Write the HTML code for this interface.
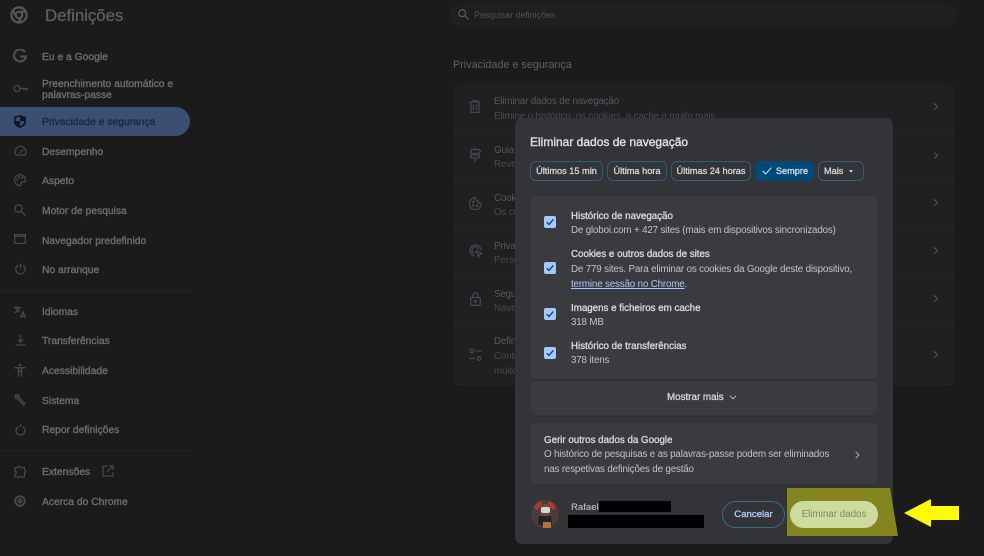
<!DOCTYPE html>
<html lang="pt"><head><meta charset="utf-8"><title>Definições</title>
<style>
*{box-sizing:border-box}
html,body{margin:0;padding:0}
body{width:984px;height:556px;overflow:hidden;background:#1b1b1b;font-family:"Liberation Sans",sans-serif;position:relative;filter:blur(.25px)}
.a{position:absolute;white-space:nowrap}
.n{position:absolute;left:42px;margin-top:1px;font-size:10.3px;line-height:11px;color:#696b6e;-webkit-text-stroke:.4px #696b6e;white-space:nowrap}
svg.i{position:absolute;fill:none;stroke:#45474a;stroke-width:1.3}
.sep{position:absolute;left:0;width:192px;height:1px;background:#232425}
.rowline{position:absolute;left:453px;width:502px;height:1px;background:#27282a}
.rt{position:absolute;left:494px;margin-top:2px;font-size:9.8px;letter-spacing:-.15px;color:#55575a;white-space:nowrap}
.rs{position:absolute;left:494px;margin-top:2px;font-size:9.8px;letter-spacing:-.15px;color:#47494c;white-space:nowrap}
.ch{position:absolute;left:932px;width:5px;height:5px;border-top:1.4px solid #56585b;border-right:1.4px solid #56585b;transform:rotate(45deg)}
.chip{position:absolute;top:161px;height:20px;border:1px solid #2f5c77;border-radius:6px;color:#cfd2d6;font-size:9.2px;-webkit-text-stroke:.35px #cfd2d6;line-height:18px;text-align:center;white-space:nowrap}
.box{position:absolute;left:530px;width:348px;background:#3a3b3f;border-radius:7px}
.cb{position:absolute;left:544px;width:12px;height:12px;background:#a8c7fa;border-radius:2px}
.cb svg{position:absolute;left:2px;top:2px}
.t{position:absolute;left:571px;margin-top:1px;font-size:9.75px;-webkit-text-stroke:.35px #d5d7da;color:#d5d7da;white-space:nowrap;line-height:12px}
.d{position:absolute;left:571px;margin-top:1px;font-size:9.8px;letter-spacing:-.17px;color:#c0c3c7;white-space:nowrap;line-height:12px}
</style></head><body>

<!-- sidebar -->
<svg class="i" style="left:10px;top:6px;stroke:#55575a;stroke-width:2" width="18" height="18" viewBox="0 0 18 18"><circle cx="9" cy="9" r="7.6" stroke-width="2.2"/><circle cx="9" cy="9" r="3.2"/><path d="M9 5.8h7M6.200 10.600 2.800 4.600M11.800 10.600 8.300 16.500"/></svg>
<div class="a" style="left:45px;top:7px;font-size:16.8px;line-height:18px;color:#5b5d60;-webkit-text-stroke:.35px #5b5d60">Definições</div>

<svg class="i" style="left:13px;top:49px;stroke:#4d4f53;stroke-width:2.2" width="14" height="14" viewBox="0 0 14 14"><path d="M12 3A6 6 0 1 0 13 7.500H7.400"/></svg>
<div class="n" style="top:51px">Eu e a Google</div>
<svg class="i" style="left:13px;top:83px" width="15" height="11" viewBox="0 0 15 11"><circle cx="4" cy="5.500" r="3"/><path d="M7 5.500h7v2.500M11 5.500v2"/></svg>
<div class="n" style="top:78px">Preenchimento automático e</div>
<div class="n" style="top:89px">palavras-passe</div>

<div class="a" style="left:0;top:107px;width:190px;height:29px;background:#3b4f72;border-radius:0 15px 15px 0"></div>
<svg class="i" style="left:14px;top:115px;stroke:none" width="12" height="13" viewBox="0 0 12 13"><path fill="#0f1720" d="M6 0 12 2v4.500c0 3-2.500 5.500-6 6.500-3.500-1-6-3.500-6-6.500V2z"/><path fill="#3b4f72" d="M6 1.600v4.700H1.500V3zM6 6.300h4.500c-.3 2-2 3.800-4.500 4.900z"/></svg>
<div class="n" style="top:116px;color:#1f2b3d;-webkit-text-stroke:.4px #1f2b3d">Privacidade e segurança</div>

<svg class="i" style="left:14px;top:145px" width="13" height="11" viewBox="0 0 13 11"><path d="M2 10h9A5.500 5.500 0 1 0 2 10zM6 8l3-3.500"/></svg>
<div class="n" style="top:146px">Desempenho</div>
<svg class="i" style="left:14px;top:174px" width="12" height="13" viewBox="0 0 12 13"><path d="M6 .7a5.500 5.500 0 0 0 0 11c1.500 0 1.400-1.200 1-2-.4-1 .3-1.600 1.200-1.600h1.500c1 0 1.700-.8 1.700-2C11.400 3 9 .7 6 .7z"/><circle cx="3.300" cy="5.500" r=".5"/><circle cx="5" cy="3.300" r=".5"/><circle cx="8" cy="3.500" r=".5"/></svg>
<div class="n" style="top:175px">Aspeto</div>
<svg class="i" style="left:14px;top:204px" width="12" height="12" viewBox="0 0 12 12"><circle cx="4.500" cy="4.500" r="3.700"/><path d="M7.300 7.300 11.500 11.500"/></svg>
<div class="n" style="top:205px">Motor de pesquisa</div>
<svg class="i" style="left:14px;top:234px" width="12" height="10" viewBox="0 0 12 10"><rect x=".6" y=".6" width="10.800" height="8.800"/><path d="M.6 2.300h10.800"/></svg>
<div class="n" style="top:235px">Navegador predefinido</div>
<svg class="i" style="left:15px;top:263px" width="11" height="12" viewBox="0 0 11 12"><path d="M3 2.300a4.700 4.700 0 1 0 5 0M5.500.5v5"/></svg>
<div class="n" style="top:264px">No arranque</div>

<div class="sep" style="top:291px"></div>

<svg class="i" style="left:13px;top:305px" width="14" height="14" viewBox="0 0 14 14"><path d="M1 2.500h7M4.500 1v1.500M2 8 7 3M2.500 3l4 4.500M7.500 13l2.500-6 2.500 6M8.300 11.300h3.400"/></svg>
<div class="n" style="top:306px">Idiomas</div>
<svg class="i" style="left:15px;top:335px" width="11" height="11" viewBox="0 0 11 11"><path d="M5.500 0v7M2.800 4.500 5.500 7.200 8.200 4.500M.5 10h10"/></svg>
<div class="n" style="top:335px">Transferências</div>
<svg class="i" style="left:14px;top:363px;stroke-width:1.500" width="12" height="14" viewBox="0 0 12 14"><circle cx="6" cy="2" r="1.400" fill="#45474a" stroke="none"/><path d="M.5 4.800h11M4.500 5v8.500M7.500 5v8.500M4.500 8h3"/></svg>
<div class="n" style="top:365px">Acessibilidade</div>
<svg class="i" style="left:14px;top:394px" width="12" height="12" viewBox="0 0 12 12"><path d="M1.200 1.500 3 3.300l1-.3.300-1L2.500.5a3 3 0 0 1 3 3.500l5.500 5.500-1.300 1.300L4.200 5.300A3 3 0 0 1 1.200 1.500z"/></svg>
<div class="n" style="top:395px">Sistema</div>
<svg class="i" style="left:15px;top:424px" width="11" height="12" viewBox="0 0 11 12"><path d="M3.500 2.600a4.500 4.500 0 1 0 4 0M5.500 0v3"/></svg>
<div class="n" style="top:424px">Repor definições</div>

<div class="sep" style="top:450px"></div>

<svg class="i" style="left:14px;top:465px" width="13" height="13" viewBox="0 0 13 13"><path d="M1 2.500h3a1.200 1.200 0 0 1 2.400 0h4.100v3a1.200 1.200 0 0 1 0 2.400v4H1V9a1.300 1.300 0 0 0 0-2.600z"/></svg>
<div class="n" style="top:466px">Extensões</div>
<svg class="i" style="left:102px;top:465px" width="12" height="12" viewBox="0 0 12 12"><path d="M5 1H1v10h10V7M7 1h4v4M11 1 5 7"/></svg>
<svg class="i" style="left:14px;top:495px;stroke-width:2" width="12" height="12" viewBox="0 0 12 12"><circle cx="6" cy="6" r="4.800"/><circle cx="6" cy="6" r="1.500"/></svg>
<div class="n" style="top:496px">Acerca do Chrome</div>

<!-- main -->
<div class="a" style="left:449px;top:3px;width:509px;height:23px;background:#1e1f20;border-radius:11px"></div>
<svg class="i" style="left:458px;top:9px;stroke:#55575a" width="11" height="11" viewBox="0 0 11 11"><circle cx="4.200" cy="4.200" r="3.400"/><path d="M6.800 6.800 10.500 10.500"/></svg>
<div class="a" style="left:474px;top:10px;font-size:8.800px;line-height:11px;color:#4f5154">Pesquisar definições</div>
<div class="a" style="left:453px;top:59px;font-size:10.800px;line-height:13px;color:#5f6164">Privacidade e segurança</div>

<div class="a" style="left:453px;top:84px;width:502px;height:302px;background:#1f2021;border-radius:6px"></div>
<div class="rowline" style="top:132px"></div><div class="rowline" style="top:180px"></div><div class="rowline" style="top:228px"></div><div class="rowline" style="top:276px"></div><div class="rowline" style="top:323px"></div>

<svg class="i" style="left:469px;top:100px" width="12" height="13" viewBox="0 0 12 13"><path d="M.5 2h11M4 2V.6h4V2M2 2v10.400h8V2M4.500 4.500v5.500M7.500 4.500v5.500"/></svg>
<div class="rt" style="top:94px">Eliminar dados de navegação</div>
<div class="rs" style="top:109px">Elimine o histórico, os cookies, a cache e muito mais</div>
<svg class="i" style="left:469px;top:148px" width="12" height="14" viewBox="0 0 12 14"><path d="M2 1.500h8l1.500 2L10 5.500H2zM2 7h8v3H2zM6 0v1.500M6 5.500V7M6 10v4"/></svg>
<div class="rt" style="top:143px">Guia de privacidade</div>
<div class="rs" style="top:157px">Reveja os principais controlos</div>
<svg class="i" style="left:469px;top:197px" width="13" height="13" viewBox="0 0 13 13"><path d="M6.500.7a6 6 0 1 0 5.800 5.800C10 6.500 9 5.500 9 4 7 4 6 2.500 6.500.7z"/><circle cx="4.500" cy="5" r=".6"/><circle cx="4" cy="8.500" r=".6"/><circle cx="8" cy="9" r=".6"/></svg>
<div class="rt" style="top:191px">Cookies de terceiros</div>
<div class="rs" style="top:205px">Os cookies de terceiros estão</div>
<svg class="i" style="left:469px;top:244px" width="14" height="14" viewBox="0 0 14 14"><path d="M12 6A5.500 5.500 0 1 0 6 12M9.500 5.500A3.300 3.300 0 1 0 5.500 9.500M7 7l6 2.500-2.300 1-1 2.500z"/></svg>
<div class="rt" style="top:239px">Privacy Sandbox</div>
<div class="rs" style="top:253px">Personalize as definições</div>
<svg class="i" style="left:470px;top:292px" width="11" height="14" viewBox="0 0 11 14"><rect x=".7" y="5.500" width="9.600" height="7.800" rx="1"/><path d="M3 5.500V3.300a2.500 2.500 0 0 1 5 0v2.200"/><circle cx="5.500" cy="9.400" r=".7"/></svg>
<div class="rt" style="top:287px">Segurança</div>
<div class="rs" style="top:301px">Navegação segura</div>
<svg class="i" style="left:469px;top:348px" width="13" height="14" viewBox="0 0 13 14"><circle cx="3" cy="3" r="1.800"/><path d="M7 3h6M0 10.500h6"/><circle cx="10" cy="10.500" r="1.800"/></svg>
<div class="rt" style="top:334px">Definições de sites</div>
<div class="rs" style="top:349px">Controla as informações</div>
<div class="rs" style="top:364px">muito mais</div>

<div class="ch" style="top:104px"></div><div class="ch" style="top:153px"></div><div class="ch" style="top:200px"></div><div class="ch" style="top:248px"></div><div class="ch" style="top:296px"></div><div class="ch" style="top:352px"></div>

<!-- modal -->
<div class="a" style="left:515px;top:118px;width:378px;height:426px;background:#323438;border-radius:7px"></div>
<div class="a" style="left:530px;top:135px;font-size:12px;line-height:14px;color:#dcdee1;-webkit-text-stroke:.4px #dcdee1">Eliminar dados de navegação</div>

<div class="chip" style="left:530px;width:73px">Últimos 15 min</div>
<div class="chip" style="left:607px;width:60px">Última hora</div>
<div class="chip" style="left:671px;width:80px">Últimas 24 horas</div>
<div class="chip" style="left:755px;width:59px;background:#004a77;border-color:#004a77;padding-left:15px;color:#c8dcec;-webkit-text-stroke:.35px #c8dcec">Sempre</div>
<svg class="i" style="left:762px;top:167px;stroke:#c2e7ff;stroke-width:1" width="10" height="8" viewBox="0 0 10 8"><path d="M.7 4 3.600 7 9.300.7"/></svg>
<div class="chip" style="left:818px;width:46px;text-align:left;padding-left:5px">Mais</div>
<div class="a" style="left:849px;top:170px;width:0;height:0;border-left:2.500px solid transparent;border-right:2.500px solid transparent;border-top:3px solid #c8cbcf"></div>

<div class="box" style="top:196px;height:183px"></div>
<div class="box" style="top:381px;height:34px"></div>
<div class="box" style="top:423px;height:61px"></div>

<div class="cb" style="top:216px"><svg width="8" height="8" viewBox="0 0 8 8" fill="none" stroke="#0b3a8a" stroke-width="1.300"><path d="M.7 4.200 3 6.400 7.300 1.400"/></svg></div>
<div class="cb" style="top:262px"><svg width="8" height="8" viewBox="0 0 8 8" fill="none" stroke="#0b3a8a" stroke-width="1.300"><path d="M.7 4.200 3 6.400 7.300 1.400"/></svg></div>
<div class="cb" style="top:308px"><svg width="8" height="8" viewBox="0 0 8 8" fill="none" stroke="#0b3a8a" stroke-width="1.300"><path d="M.7 4.200 3 6.400 7.300 1.400"/></svg></div>
<div class="cb" style="top:347px"><svg width="8" height="8" viewBox="0 0 8 8" fill="none" stroke="#0b3a8a" stroke-width="1.300"><path d="M.7 4.200 3 6.400 7.300 1.400"/></svg></div>

<div class="t" style="top:210px">Histórico de navegação</div>
<div class="d" style="top:224px">De globoi.com + 427 sites (mais em dispositivos sincronizados)</div>
<div class="t" style="top:248px">Cookies e outros dados de sites</div>
<div class="d" style="top:263px">De 779 sites. Para eliminar os cookies da Google deste dispositivo,</div>
<div class="d" style="top:278px"><span style="color:#a8c7fa;text-decoration:underline">termine sessão no Chrome</span>.</div>
<div class="t" style="top:302px">Imagens e ficheiros em cache</div>
<div class="d" style="top:316px">318 MB</div>
<div class="t" style="top:340px">Histórico de transferências</div>
<div class="d" style="top:354px">378 itens</div>

<div class="a" style="left:667px;top:392px;font-size:9.800px;line-height:12px;color:#cfd2d6;-webkit-text-stroke:.35px #cfd2d6">Mostrar mais</div>
<svg class="i" style="left:729px;top:395px;stroke:#c4c7cb;stroke-width:1" width="8" height="5" viewBox="0 0 9 6"><path d="M.8.800 4.500 4.700 8.200.8"/></svg>

<div class="a" style="left:544px;top:435px;font-size:9.750px;line-height:12px;color:#d5d7da;-webkit-text-stroke:.35px #d5d7da">Gerir outros dados da Google</div>
<div class="a" style="left:544px;top:449px;font-size:9.800px;letter-spacing:-.17px;line-height:12px;color:#c0c3c7">O histórico de pesquisas e as palavras-passe podem ser eliminados</div>
<div class="a" style="left:544px;top:464px;font-size:9.800px;letter-spacing:-.17px;line-height:12px;color:#c0c3c7">nas respetivas definições de gestão</div>
<svg class="i" style="left:855px;top:451px;stroke:#c4c7cb;stroke-width:1" width="5" height="8" viewBox="0 0 6 9"><path d="M.8.800 4.700 4.500.8 8.200"/></svg>

<!-- footer -->
<svg class="a" style="left:531px;top:499px" width="29" height="30" viewBox="0 0 29 30"><circle cx="14" cy="15" r="14" fill="#4c3a3c"/><path d="M3 9c2-5 5-7 7-7l1 5-5 4zM25 9c-2-5-5-7-7-7l-1 5 5 4z" fill="#a83a2e"/><rect x="9" y="5" width="10" height="12" rx="4" fill="#6b4a3a"/><rect x="10" y="8" width="9" height="6" rx="2" fill="#d9d4d0"/><path d="M8 17h12l1 9H7z" fill="#20232a"/><rect x="12" y="23" width="8" height="6" fill="#b8713a"/></svg>
<div class="a" style="left:571px;top:502px;font-size:9.600px;line-height:12px;color:#c8cbcf">Rafael</div>
<div class="a" style="left:599px;top:501px;width:72px;height:11px;background:#000"></div>
<div class="a" style="left:568px;top:515px;width:136px;height:13px;background:#000"></div>

<div class="a" style="left:722px;top:501px;width:63px;height:27px;border:1px solid #2f6f8f;border-radius:14px;color:#a8c7fa;font-size:9.600px;-webkit-text-stroke:.35px #a8c7fa;line-height:26px;text-align:center">Cancelar</div>

<svg class="a" style="left:780px;top:480px" width="180" height="62" viewBox="0 0 180 62"><path d="M7 8h103l8 48H7z" fill="#85851f"/><path d="M124 33 151 19v7h28v14h-28v7z" fill="#fcfc0a"/></svg>
<div class="a" style="left:790px;top:501px;width:88px;height:27px;background:#cddb9e;border-radius:14px;color:#7d8b63;font-size:9.800px;line-height:28px;text-align:center">Eliminar dados</div>

</body></html>
